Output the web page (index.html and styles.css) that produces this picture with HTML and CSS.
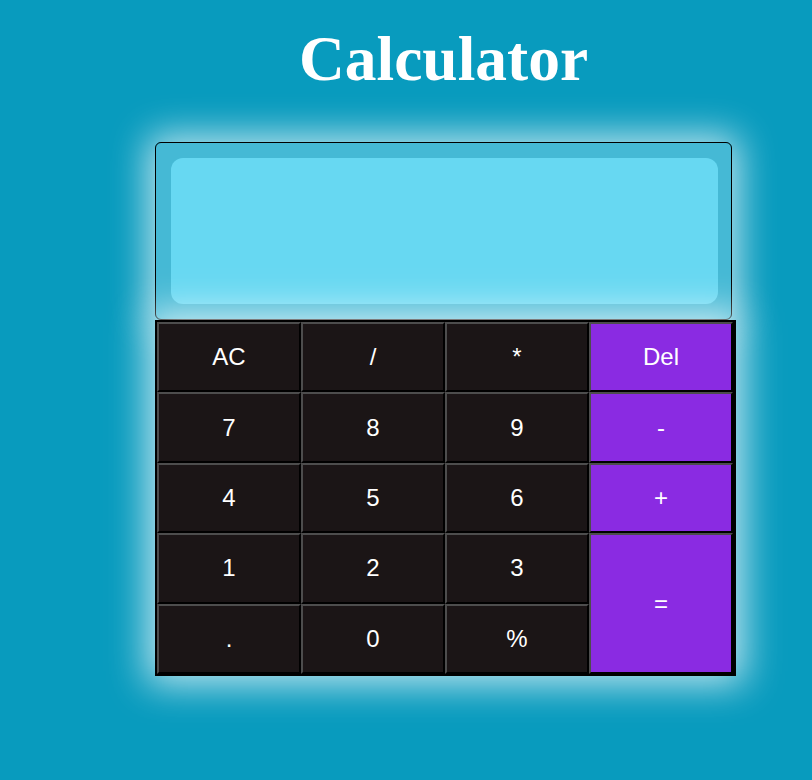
FILE: index.html
```html
<!DOCTYPE html>
<html lang="en">
<head>
<meta charset="utf-8">
<title>Calculator</title>
<link rel="stylesheet" href="styles.css">
</head>
<body>
<div class="wrap">
  <h1 class="title">Calculator</h1>
  <div class="display">
    <div class="screen"></div>
  </div>
  <div class="keys">
    <button class="key">AC</button>
    <button class="key">/</button>
    <button class="key">*</button>
    <button class="key op">Del</button>
    <button class="key">7</button>
    <button class="key">8</button>
    <button class="key">9</button>
    <button class="key op">-</button>
    <button class="key">4</button>
    <button class="key">5</button>
    <button class="key">6</button>
    <button class="key op">+</button>
    <button class="key">1</button>
    <button class="key">2</button>
    <button class="key">3</button>
    <button class="key op eq">=</button>
    <button class="key">.</button>
    <button class="key">0</button>
    <button class="key">%</button>
  </div>
</div>
</body>
</html>
```
FILE: styles.css
```css
html, body {
  margin: 0;
  padding: 0;
}
body {
  background: #089bbe;
  min-height: 780px;
  font-family: "Liberation Sans", Arial, sans-serif;
}
.wrap {
  margin-left: 155px;
  width: 581px;
  padding-top: 1px;
}
.title {
  margin: 21px 0 0 -4px;
  height: 120px;
  text-align: center;
  color: #fff;
  font-family: "Liberation Serif", "Times New Roman", serif;
  font-weight: bold;
  font-size: 63.5px;
  line-height: 73px;
}
.display {
  border: 1px solid #000;
  border-radius: 6px;
  background: rgba(110, 205, 228, 0.6);
  box-shadow: 0 0 36px 8px rgba(255, 255, 255, 0.7);
  padding: 15px;
  box-sizing: border-box;
  height: 178px;
  width: 577px;
}
.screen {
  width: 547px;
  height: 146px;
  border-radius: 12px;
  background: #67d8f2;
}
.keys {
  display: grid;
  grid-template-columns: repeat(4, 144px);
  grid-template-rows: repeat(5, 70.4px);
  border: 2px solid #000;
  border-right-width: 3px;
  background: #000;
  width: 576px;
  box-shadow: 0 0 36px 8px rgba(255, 255, 255, 0.75);
}
.key {
  margin: 0;
  padding: 0;
  border-style: solid;
  border-width: 2px;
  border-color: #4d4d4d #000 #000 #4d4d4d;
  background: #1b1516;
  color: #fff;
  font-family: "Liberation Sans", Arial, sans-serif;
  font-size: 24px;
}
.op {
  background: #8a2be2;
}
.eq {
  grid-column: 4;
  grid-row: 4 / span 2;
}
```
